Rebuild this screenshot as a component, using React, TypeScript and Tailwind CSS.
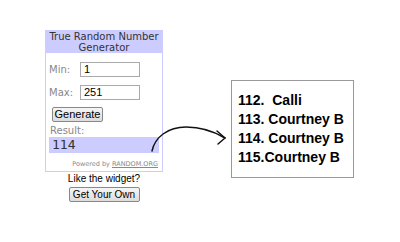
import React from "react";

export default function App() {
  return (
    <div className="relative w-[400px] h-[242px] bg-white flex items-start overflow-hidden">
      {/* widget column */}
      <div className="ml-[45px] mt-[30px] w-[118px] flex flex-col items-center">
        <div className="w-full h-[142px] border border-[#ccccff] flex flex-col font-['DejaVu_Sans',sans-serif]">
          <div className="h-[22px] bg-[#ccccff] flex flex-col items-center justify-center text-[10px] leading-[11px] text-[#333]">
            <span>True Random Number</span>
            <span>Generator</span>
          </div>
          <div className="flex flex-col px-[3px]">
            <div className="flex items-center mt-[9px] h-[15px]">
              <span className="w-[31px] text-[10px] text-[#888]">Min:</span>
              <div className="w-[60px] h-[15px] border border-[#aaa] bg-white pl-[3px] flex items-center text-[11px] font-['Liberation_Sans',sans-serif] text-black">1</div>
            </div>
            <div className="flex items-center mt-[8px] h-[15px]">
              <span className="w-[31px] text-[10px] text-[#888]">Max:</span>
              <div className="w-[60px] h-[15px] border border-[#aaa] bg-white pl-[3px] flex items-center text-[11px] font-['Liberation_Sans',sans-serif] text-black">251</div>
            </div>
            <div className="mt-[7px] ml-[3px] w-[51px] h-[15px] rounded-[2px] border border-[#888] bg-gradient-to-b from-[#f6f6f6] to-[#dcdcdc] flex items-center justify-center text-[11px] font-['Liberation_Sans',sans-serif] text-black">
              Generate
            </div>
            <span className="mt-[3px] pl-[1px] text-[10px] leading-[12px] text-[#888]">Result:</span>
            <div className="h-[16px] bg-[#ccccff] flex items-center pl-[3px] text-[13px] font-['DejaVu_Sans_Mono',monospace] text-[#333]">
              114
            </div>
            <div className="mt-[7px] pr-[1px] text-right text-[6.5px] leading-[8px] text-[#888]">
              Powered by <span className="underline">RANDOM.ORG</span>
            </div>
          </div>
        </div>
        <div className="mt-[1px] text-[10px] leading-[12px] text-black font-['Liberation_Sans',sans-serif] whitespace-nowrap">
          Like the widget?
        </div>
        <div className="mt-[2px] w-[71px] h-[15px] rounded-[2px] border border-[#888] bg-gradient-to-b from-[#f6f6f6] to-[#dcdcdc] flex items-center justify-center text-[10px] text-black font-['Liberation_Sans',sans-serif] whitespace-nowrap">
          Get Your Own
        </div>
      </div>

      {/* list box */}
      <div className="ml-[68px] mt-[80px] w-[123px] h-[98px] border border-[#999] bg-white pl-[6px] pt-[10px] flex flex-col font-['Liberation_Sans',sans-serif] font-bold text-[14px] leading-[19px] text-black whitespace-pre">
        <span>112.  Calli</span>
        <span>113. Courtney B</span>
        <span>114. Courtney B</span>
        <span>115.Courtney B</span>
      </div>

      {/* arrow */}
      <svg
        className="absolute left-0 top-0 pointer-events-none"
        width="400"
        height="242"
        viewBox="0 0 400 242"
      >
        <path
          d="M152 151 C 155 137, 168 127, 186 127 C 203 127, 215 132, 225 138"
          fill="none"
          stroke="#111"
          strokeWidth="1.5"
          strokeLinecap="round"
        />
        <path
          d="M217 131 L 225 138 L 218 144"
          fill="none"
          stroke="#111"
          strokeWidth="1.5"
          strokeLinecap="round"
          strokeLinejoin="round"
        />
      </svg>
    </div>
  );
}
